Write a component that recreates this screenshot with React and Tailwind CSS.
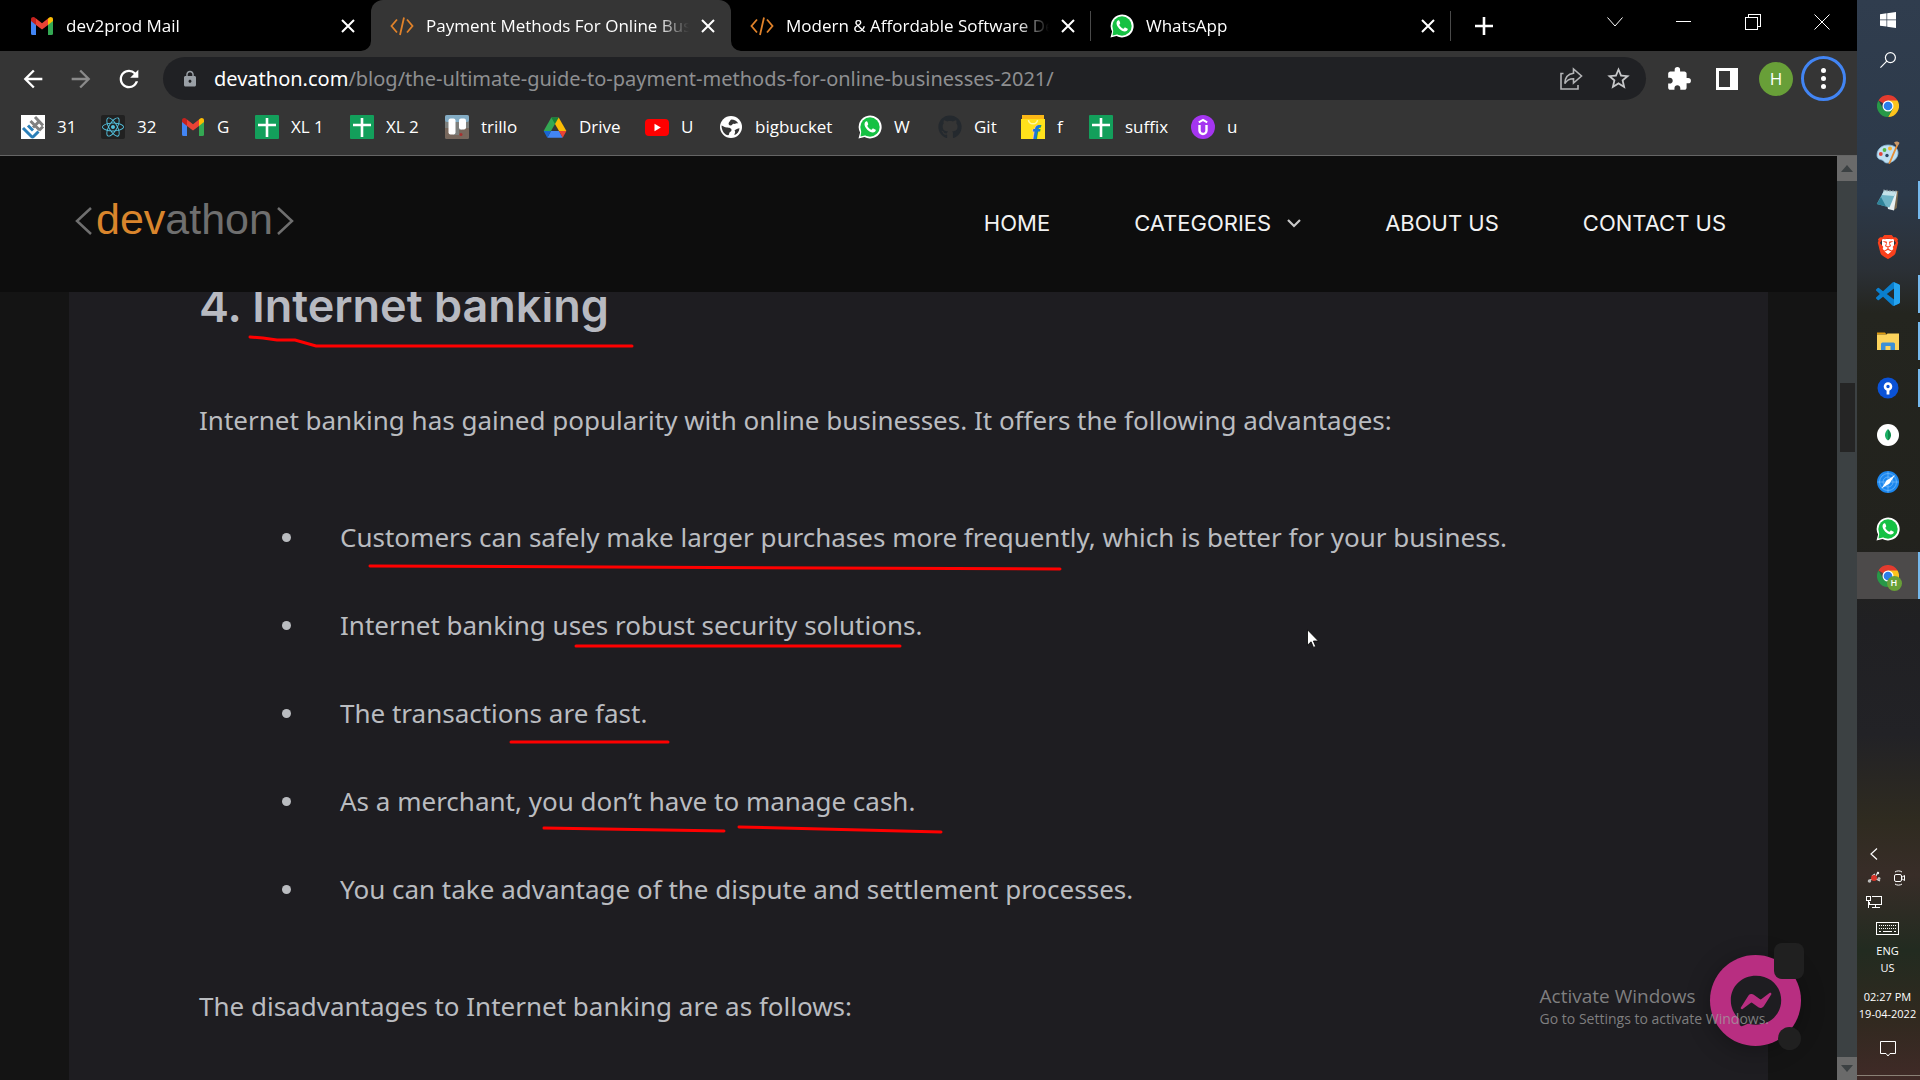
import React from "react";
import { FaWhatsapp, FaGithub, FaReact, FaFacebookMessenger } from "react-icons/fa";
import { MdExtension, MdLock, MdStarBorder, MdRefresh, MdArrowBack, MdArrowForward } from "react-icons/md";
import { SiBrave } from "react-icons/si";

/* ---------- icons ---------- */

function Gmail() {
  return (
    <svg viewBox="0 0 24 24" className="size-6" aria-hidden="true">
      <path d="M1 20.5V6l5 4v11H2.5A1.5 1.5 0 0 1 1 19.500z" fill="#4285f4" />
      <path d="M18 21V10l5-4v13.500a1.500 1.500 0 0 1-1.500 1.500z" fill="#34a853" />
      <path d="M6 11V4.500l6 4.700 6-4.700V11l-6 4.600z" fill="#ea4335" />
      <path d="M1 7V5.300C1 3.200 3.300 2.300 4.800 3.500L6 4.500V11z" fill="#c5221f" />
      <path d="M23 7V5.300c0-2.100-2.300-3-3.800-1.800L18 4.500V11z" fill="#fbbc04" />
    </svg>
  );
}

function CodeMark() {
  return (
    <svg viewBox="0 0 24 24" className="size-6" fill="none" stroke="#e0822a" strokeWidth="1.8" aria-hidden="true">
      <path d="M7 5.500 1.500 12 7 18.500M17 5.500 22.500 12 17 18.500M14 3.500 10 21" />
    </svg>
  );
}

function WhatsAppMark() {
  return (
    <svg viewBox="0 0 24 24" className="size-6" aria-hidden="true">
      <path d="M.5 23.500 2.100 17.600A11.500 11.500 0 1 1 6.500 22z" fill="#fff" />
      <circle cx="12" cy="12" r="9.700" fill="#15c143" />
      <path d="M3.500 15 2.500 21.500 9 20z" fill="#15c143" />
      <path
        d="M8.500 6.300c-.7 0-2 1-2 3 0 3.300 4.700 8.300 8.300 8.300 1.600 0 3-1.200 3-2.500 0-.5-.2-.6-2.600-1.700-.7-.3-1 1.400-1.800 1.300-1.300-.2-4-2.700-4.100-3.900 0-.6 1.200-1 .9-1.800-.8-2.200-.9-2.700-1.700-2.700z"
        fill="#fff"
      />
    </svg>
  );
}

function HackerBlog() {
  return (
    <svg viewBox="0 0 24 24" className="size-6" aria-hidden="true">
      <rect width="24" height="24" fill="#fff" />
      <g fill="none" strokeWidth="3" strokeLinejoin="round">
        <path d="M9.500 6l9 9M14 2l8 8.500M12 12.500l5.500-5.500M18 15.500l4-4" stroke="#808080" />
        <path d="M2 13l8.500 8.500a1.500 1.500 0 0 0 2 0l5-5M7 10.500l5 5" stroke="#2a7fb8" />
      </g>
    </svg>
  );
}

function ReactMark() {
  return (
    <span className="flex size-6 items-center justify-center rounded-xs bg-[#212121]">
      <FaReact className="size-[22px] text-[#53c1de]" />
    </span>
  );
}

function Sheet() {
  return (
    <svg viewBox="0 0 24 24" className="size-6" aria-hidden="true">
      <rect width="24" height="24" rx="1" fill="#139f5b" />
      <path d="M12 3v19M3 10h18" stroke="#fff" strokeWidth="2.600" />
    </svg>
  );
}

function Trello() {
  return (
    <svg viewBox="0 0 24 24" className="size-6" aria-hidden="true">
      <rect width="24" height="24" rx="2" fill="#7d7f7c" />
      <rect width="24" height="7" rx="2" fill="#83acc4" />
      <path d="M0 13h4v3h4v4h6v-5h3v-2h7v9a2 2 0 0 1-2 2H2a2 2 0 0 1-2-2z" fill="#77675c" />
      <circle cx="16" cy="19.500" r="1.500" fill="#a8302f" />
      <rect x="3.500" y="3.500" width="7" height="16" rx="2" fill="#fff" />
      <rect x="14" y="3.500" width="7" height="11" rx="2" fill="#fff" />
    </svg>
  );
}

function Drive() {
  return (
    <svg viewBox="0 0 24 24" className="size-6" aria-hidden="true">
      <path d="M8.300 2.500h7.400L8 16H.6z" fill="#34a853" />
      <path d="M8.300 2.500h7.400L12 9z" fill="#188038" />
      <path d="M15.700 2.500 23.400 16H16L12 9z" fill="#fbbc04" />
      <path d="M8 16h8l3.700 6.800H4.300z" fill="#4285f4" />
      <path d="M.6 16H8l-3.700 6.800z" fill="#1967d2" />
      <path d="M16 16h7.400l-3.700 6.800z" fill="#ea4335" />
    </svg>
  );
}

function YouTube() {
  return (
    <svg viewBox="0 0 24 24" className="size-6" aria-hidden="true">
      <rect y="4" width="24" height="17" rx="4" fill="#f00" />
      <path d="M9.500 8.800v7.400l6.300-3.700z" fill="#fff" />
    </svg>
  );
}

function Globe() {
  return (
    <svg viewBox="0 0 24 24" className="size-6" aria-hidden="true">
      <circle cx="12" cy="12" r="11" fill="#fff" />
      <g fill="#353535">
        <path d="M12.500 4.500c2.500 0 5.500 1.200 6.800 4-1.800-.8-2.800.8-4.600.3-1.400-.4-1 1.500-2.700 1.600-2.300.1-2.800-1.500-2.200-2.700.6-1.300 2-1.400 1.400-2.400z" />
        <path d="M2.500 10.500c2 .5 3 2 5.500 2 2 .1 4.500.6 4.500 2.500 0 1.500-1.300 1.500-2 2.500-.5 1-.2 2.800-1.500 2.800-3 0-6.500-4.500-6.500-9.800z" />
        <path d="M15.500 15.500c1-1.300 3.500-2 5-2.300-.2 3-2.300 5.800-4.800 6.900-1-.6 1.600-2.800-.2-4.600z" />
      </g>
    </svg>
  );
}

function Flipkart() {
  return (
    <svg viewBox="0 0 24 24" className="size-6" aria-hidden="true">
      <path d="M1 0h22v4h1v20H0V4h1z" fill="#ffe11b" />
      <path d="M1 0h22v4H1z" fill="#fbb716" />
      <path d="M7.500 5c.5 5 8.500 5 9 0" fill="none" stroke="#fff6a0" strokeWidth="1.500" />
      <text x="11" y="24" fontFamily="Inter, sans-serif" fontStyle="italic" fontWeight="900" fontSize="18" fill="#1878d8">f</text>
    </svg>
  );
}

function Udemy() {
  return (
    <svg viewBox="0 0 24 24" className="size-6" fill="none" aria-hidden="true">
      <circle cx="12" cy="12" r="12" fill="#a435f0" />
      <path d="M7.800 7.300 12 4.800l4.200 2.500" stroke="#fff" strokeWidth="2" />
      <path d="M8.500 10v5.500a3.500 3.500 0 0 0 7 0V10" stroke="#fff" strokeWidth="2.400" />
    </svg>
  );
}

function Chrome({ className = "size-[22px]" }) {
  return (
    <svg viewBox="0 0 24 24" className={className} aria-hidden="true">
      <path d="M12 12 1.600 6A12 12 0 0 1 22.400 6z" fill="#e33b2e" />
      <path d="M12 12V6h10.400A12 12 0 0 1 12 24l5.200-9z" fill="#fcc41d" />
      <path d="M17.200 15 12 24A12 12 0 0 1 1.600 6l5.200 9 5.200 3z" fill="#279847" />
      <circle cx="12" cy="12" r="6" fill="#fff" />
      <circle cx="12" cy="12" r="4.700" fill="#2b7de9" />
    </svg>
  );
}

function Paint() {
  return (
    <svg viewBox="0 0 24 24" className="size-6" aria-hidden="true">
      <path d="M1 14C1 8 6 4 12 4s10 3 10 8-5 10-11 10c-3 0-3-2.500-5-3s-5-1-5-5z" fill="#bfe0f2" stroke="#86b8d8" strokeWidth=".8" />
      <circle cx="4.800" cy="13" r="1.900" fill="#e2463b" />
      <circle cx="8.500" cy="9" r="1.900" fill="#57b947" />
      <circle cx="14" cy="7.500" r="2" fill="#f6b22f" />
      <circle cx="11" cy="14.500" r="1.700" fill="#2a4666" />
      <path d="M20.500 3.500 22 4.500 14 23l-1.700-.5z" fill="#e58b32" />
      <path d="M18 1.500c2-1.500 4.500-1 5.500.5-.5 1-1 2.500-2.500 3.500z" fill="#c99868" />
    </svg>
  );
}

function Notes() {
  return (
    <svg viewBox="0 0 24 24" className="size-6" aria-hidden="true">
      <path d="M20 3h2.300l-1.500 17-3 2z" fill="#7a6a50" />
      <path d="M8 2.500 21 3.500 18 22.500 12 21z" fill="#e9f1f3" />
      <path d="M8 2.500 20 4 13.500 19.500.8 16z" fill="#6fb4c6" />
      <path d="M8 2.500 20 4l-1.800 4L6 7z" fill="#c5e2e9" />
      <path d="M.8 16 5 9l5 9.500z" fill="#2f8298" />
      <path d="M8 1.500v2M11 1.700v2M14 2v2M17 2.200v2M20 2.500v2" stroke="#9da9ad" />
    </svg>
  );
}

function Brave() {
  return (
    <span className="relative flex size-6 items-center justify-center">
      <span className="absolute h-4 w-3 rounded-b-md bg-white" />
      <SiBrave className="relative size-6 text-[#f9401c]" />
    </span>
  );
}

function VsCode() {
  return (
    <svg viewBox="0 0 24 24" className="size-6" aria-hidden="true">
      <path
        d="M23.150 2.587L18.210.21a1.494 1.494 0 0 0-1.705.29l-9.460 8.630-4.120-3.128a.999.999 0 0 0-1.276.057L.327 7.261A1 1 0 0 0 .326 8.740L3.899 12 .326 15.260a1 1 0 0 0 .001 1.479L1.650 17.940a.999.999 0 0 0 1.276.057l4.120-3.128 9.460 8.630a1.492 1.492 0 0 0 1.704.29l4.942-2.377A1.500 1.500 0 0 0 24 20.060V3.939a1.500 1.500 0 0 0-.85-1.352zm-5.146 14.861L10.826 12l7.178-5.448v10.896z"
        fill="#0a7fce"
      />
      <path d="M18 .2 23.150 2.600q.85.400.85 1.350v16.100q0 .95-.85 1.350L18 23.800z" fill="#25a4f0" />
    </svg>
  );
}

function Folder() {
  return (
    <svg viewBox="0 0 24 24" className="size-6" aria-hidden="true">
      <path d="M1 3.500h8l1.500 2H1z" fill="#dd9a10" />
      <path d="M1 5.500h9.500l1-1H23V21H1z" fill="#fcd35c" />
      <path d="M5 21v-6a1.500 1.500 0 0 1 1.500-1.500h11A1.500 1.500 0 0 1 19 15v6h-4.500v-4h-5v4z" fill="#3c8fd6" />
    </svg>
  );
}

function Sourcetree() {
  return (
    <svg viewBox="0 0 24 24" className="size-6" aria-hidden="true">
      <circle cx="12" cy="12" r="10.500" fill="#0a52d6" />
      <circle cx="12" cy="10.500" r="3" fill="none" stroke="#fff" strokeWidth="2.600" />
      <path d="M12 14v4.500" stroke="#fff" strokeWidth="2.800" />
    </svg>
  );
}

function Mongo() {
  return (
    <svg viewBox="0 0 24 24" className="size-6" aria-hidden="true">
      <circle cx="12" cy="12" r="11" fill="#fff" />
      <path d="M12 6c2 2 3 4 3 6.200 0 2.300-1.200 3.800-3 5.300z" fill="#0f8a4b" />
      <path d="M12 6c-2 2-3 4-3 6.200 0 2.300 1.200 3.800 3 5.300z" fill="#1bb065" />
    </svg>
  );
}

function Compass() {
  return (
    <svg viewBox="0 0 24 24" className="size-6" aria-hidden="true">
      <circle cx="12" cy="12" r="11" fill="#1b87ef" />
      <g fill="none" stroke="#6db6fa" strokeWidth=".8">
        <circle cx="12" cy="12" r="8.500" />
        <circle cx="12" cy="12" r="5" />
        <path d="M1.500 12h21M12 1.500v21" />
      </g>
      <path d="M19 5 13.500 13.500 5.500 18.500l5-8z" fill="#fff" />
    </svg>
  );
}

function ProfileChrome() {
  return (
    <span className="relative">
      <Chrome />
      <span className="absolute -right-[3px] -bottom-1 flex size-[15px] items-center justify-center rounded-full bg-[#689f38] text-[9px] font-semibold text-white">
        H
      </span>
    </span>
  );
}

function CloseX() {
  return (
    <svg viewBox="0 0 14 14" className="size-[14px]" stroke="#fff" strokeWidth="2" aria-hidden="true">
      <path d="M1 1l12 12M13 1 1 13" />
    </svg>
  );
}

/* ---------- browser chrome ---------- */

const tabs = [
  { title: "dev2prod Mail", icon: <Gmail /> },
  { title: "Payment Methods For Online Business", icon: <CodeMark />, active: true },
  { title: "Modern & Affordable Software Development", icon: <CodeMark /> },
  { title: "WhatsApp", icon: <WhatsAppMark /> },
];

function Tab({ title, icon, active, divided }) {
  return (
    <div
      className={
        "relative flex h-full w-[360px] min-w-0 items-center gap-3 pl-[19px] pr-4 " +
        (active ? "rounded-t-xl bg-[#353535]" : "")
      }
    >
      {active && (
        <>
          <svg viewBox="0 0 10 10" className="absolute bottom-0 -left-[10px] size-[10px]" fill="#353535" aria-hidden="true">
            <path d="M10 0v10H0A10 10 0 0 0 10 0z" />
          </svg>
          <svg viewBox="0 0 10 10" className="absolute bottom-0 -right-[10px] size-[10px]" fill="#353535" aria-hidden="true">
            <path d="M0 0v10h10A10 10 0 0 1 0 0z" />
          </svg>
        </>
      )}
      <span className="shrink-0">{icon}</span>
      <span className="min-w-0 flex-1 overflow-hidden whitespace-nowrap text-[17px] [mask-image:linear-gradient(to_right,black_88%,transparent)]">
        {title}
      </span>
      <button type="button" aria-label={"Close " + title} className="shrink-0">
        <CloseX />
      </button>
      {divided && <span className="absolute right-0 h-[30px] w-px bg-[#4a4a4a]" />}
    </div>
  );
}

function TabStrip() {
  return (
    <div className="flex h-[51px] bg-black pl-[11px] pr-px">
      {tabs.map((t, i) => (
        <Tab key={t.title} {...t} divided={i > 1} />
      ))}
      <button type="button" aria-label="New tab" className="ml-6 shrink-0">
        <svg viewBox="0 0 18 18" className="size-[18px]" stroke="#fff" strokeWidth="2.600" aria-hidden="true">
          <path d="M9 0v18M0 9h18" />
        </svg>
      </button>
      <div className="ml-auto flex h-[43px] shrink-0 items-center">
        <button type="button" aria-label="Search tabs" className="flex w-[69px] justify-center">
          <svg viewBox="0 0 16 10" className="h-[10px] w-4" fill="none" stroke="#fff" strokeWidth="1" aria-hidden="true">
            <path d="M.5.5 8 9 15.500.5" />
          </svg>
        </button>
        <button type="button" aria-label="Minimize" className="flex w-[69px] justify-center">
          <span className="h-px w-[15px] bg-white" />
        </button>
        <button type="button" aria-label="Restore" className="flex w-[69px] justify-center">
          <svg viewBox="0 0 16 16" className="size-4" fill="none" stroke="#fff" shapeRendering="crispEdges" aria-hidden="true">
            <path d="M.5 3.500h12v12H.5zM3.500 3.500v-3h12v12h-3" />
          </svg>
        </button>
        <button type="button" aria-label="Close window" className="flex w-[69px] justify-center">
          <svg viewBox="0 0 16 16" className="size-4" stroke="#fff" aria-hidden="true">
            <path d="M.5.5l15 15M15.500.5l-15 15" />
          </svg>
        </button>
      </div>
    </div>
  );
}

function Toolbar() {
  return (
    <div className="flex h-[55px] items-center bg-[#353535] pl-[19px] pr-[11px]">
      <div className="flex shrink-0 items-center gap-5">
        <button type="button" aria-label="Back"><MdArrowBack className="size-7 text-white" /></button>
        <button type="button" aria-label="Forward"><MdArrowForward className="size-7 text-[#8a8a8a]" /></button>
        <button type="button" aria-label="Reload"><MdRefresh className="size-7 text-white" /></button>
      </div>
      <div className="ml-5 flex h-[43px] min-w-0 flex-1 items-center rounded-full bg-[#202124] pl-[18px] pr-[14px]">
        <MdLock className="size-[18px] shrink-0 text-[#9aa0a6]" />
        <span className="ml-[15px] min-w-0 flex-1 overflow-hidden whitespace-nowrap font-['Noto_Sans',sans-serif] text-[20px] text-[#8e8f91]">
          <span className="text-white">devathon.com</span>/blog/the-ultimate-guide-to-payment-methods-for-online-businesses-2021/
        </span>
        <div className="flex shrink-0 items-center gap-[22px]">
          <button type="button" aria-label="Share this page">
            <svg viewBox="0 0 24 24" className="size-6" fill="none" stroke="#b4b5b7" strokeWidth="1.600" aria-hidden="true">
              <path d="M4.500 6.500H2V22h17v-4" />
              <path d="M14.500 2v4.300C8.500 7 6 11 5.800 16.500c2-3.500 5-4.800 8.700-4.800V16l8-7z" />
            </svg>
          </button>
          <button type="button" aria-label="Bookmark this page"><MdStarBorder className="size-[27px] text-[#c6c7c9]" /></button>
        </div>
      </div>
      <div className="flex shrink-0 items-center">
        <button type="button" aria-label="Extensions" className="ml-5"><MdExtension className="size-[26px] text-white" /></button>
        <button type="button" aria-label="Side panel" className="ml-6">
          <svg viewBox="0 0 22 22" className="size-[22px]" aria-hidden="true">
            <path d="M0 0h22v22H0zM3 3v16h11V3z" fill="#fff" fillRule="evenodd" />
          </svg>
        </button>
        <button type="button" aria-label="Profile" className="ml-[21px] flex size-[34px] items-center justify-center rounded-full bg-[#689f38] text-[17px] text-white">
          H
        </button>
        <button type="button" aria-label="Menu" className="ml-2 flex size-[45px] flex-col items-center justify-center gap-[3px] rounded-full border-[3px] border-[#4285f4]">
          <span className="size-[5px] rounded-full bg-white" />
          <span className="size-[5px] rounded-full bg-white" />
          <span className="size-[5px] rounded-full bg-white" />
        </button>
      </div>
    </div>
  );
}

const bookmarks = [
  { label: "31", icon: <HackerBlog />, w: "w-20" },
  { label: "32", icon: <ReactMark />, w: "w-20" },
  { label: "G", icon: <Gmail />, w: "w-[74px]" },
  { label: "XL 1", icon: <Sheet />, w: "w-[95px]" },
  { label: "XL 2", icon: <Sheet />, w: "w-[95px]" },
  { label: "trillo", icon: <Trello />, w: "w-[98px]" },
  { label: "Drive", icon: <Drive />, w: "w-[102px]" },
  { label: "U", icon: <YouTube />, w: "w-[74px]" },
  { label: "bigbucket", icon: <Globe />, w: "w-[139px]" },
  { label: "W", icon: <WhatsAppMark />, w: "w-20" },
  { label: "Git", icon: <FaGithub className="size-6 text-[#24292e]" />, w: "w-[83px]" },
  { label: "f", icon: <Flipkart />, w: "w-[68px]" },
  { label: "suffix", icon: <Sheet />, w: "w-[102px]" },
  { label: "u", icon: <Udemy />, w: "w-20" },
];

function Bookmarks() {
  return (
    <nav aria-label="Bookmarks" className="flex items-center border-b border-[#656565] bg-[#353535] pt-[9px] pb-4 pl-[21px] text-[17px] leading-6">
      {bookmarks.map((b) => (
        <a key={b.label} href="#" className={"flex shrink-0 items-center gap-3 whitespace-nowrap " + b.w}>
          {b.icon}
          {b.label}
        </a>
      ))}
    </nav>
  );
}

/* ---------- web page ---------- */

function SiteHeader() {
  return (
    <header className="relative z-10 flex h-[136px] shrink-0 items-center justify-between bg-[#0d0d0d] pb-0.5 pl-[75px] pr-[111px]">
      <a href="#" className="flex items-center gap-1 pb-2 font-['Liberation_Sans',sans-serif] text-[43px] leading-[48px] text-[#6f6f6f]">
        <svg viewBox="0 0 17 28" className="mt-1 h-7 w-[17px]" fill="none" stroke="#6f6f6f" strokeWidth="2.500" aria-hidden="true">
          <path d="M16 1 2 14l14 13" />
        </svg>
        <span><span className="text-[#d9852c]">dev</span>athon</span>
        <svg viewBox="0 0 17 28" className="mt-1 h-7 w-[17px]" fill="none" stroke="#6f6f6f" strokeWidth="2.500" aria-hidden="true">
          <path d="M1 1l14 13L1 27" />
        </svg>
      </a>
      <nav aria-label="Main" className="flex items-center gap-[84px] font-['Inter',sans-serif] text-[22px] text-[#f2f2f2]">
        <a href="#">HOME</a>
        <a href="#" className="flex items-center gap-4">
          CATEGORIES
          <svg viewBox="0 0 14 9" className="h-[9px] w-[14px]" fill="none" stroke="#c8c8c8" strokeWidth="2.200" aria-hidden="true">
            <path d="M1 1l6 6 6-6" />
          </svg>
        </a>
        <a href="#">ABOUT US</a>
        <a href="#">CONTACT US</a>
      </nav>
    </header>
  );
}

const advantages = [
  "Customers can safely make larger purchases more frequently, which is better for your business.",
  "Internet banking uses robust security solutions.",
  "The transactions are fast.",
  "As a merchant, you don’t have to manage cash.",
  "You can take advantage of the dispute and settlement processes.",
];

/* Red pen strokes drawn over the article. */
function PenMarks() {
  return (
    <svg
      className="pointer-events-none absolute top-0 left-0 h-[788px] w-[1200px]"
      viewBox="0 0 1200 788"
      fill="none"
      stroke="#f00"
      strokeWidth="3"
      strokeLinecap="round"
      aria-hidden="true"
    >
      <path d="M181 45 194 46 208 48H226L247 54H563" />
      <path d="M301 274 991 277" />
      <path d="M507 354H831" />
      <path d="M442 450H599" />
      <path d="M475 536 655 539" />
      <path d="M670 535 872 540" />
    </svg>
  );
}

function Article() {
  return (
    <article className="relative mx-[69px] min-h-0 flex-1 overflow-hidden bg-[#1e1d21] px-[130px] font-['Noto_Sans',sans-serif] text-[26px] leading-[44px] text-[#babcc0]">
      <h2 className="-mt-4 font-['Inter',sans-serif] text-[45px] font-semibold leading-[60px] text-[#b8bac1]">4. Internet banking</h2>
      <p className="mt-[62px]">Internet banking has gained popularity with online businesses. It offers the following advantages:</p>
      <ul className="mt-[73px] flex flex-col gap-[44px] pl-[83px]">
        {advantages.map((a) => (
          <li key={a} className="flex items-center gap-[49px]">
            <span className="size-[9px] shrink-0 rounded-full bg-[#babcc0]" />
            {a}
          </li>
        ))}
      </ul>
      <p className="mt-[73px]">The disadvantages to Internet banking are as follows:</p>
      <PenMarks />
    </article>
  );
}

function Scrollbar() {
  return (
    <div className="flex w-5 shrink-0 flex-col items-center bg-[#3c4143]" aria-hidden="true">
      <div className="flex h-[25px] w-full items-center justify-center bg-[#6a6a6a]">
        <svg viewBox="0 0 12 7" className="h-[7px] w-3" fill="#3c4143"><path d="M6 0l6 7H0z" /></svg>
      </div>
      <div className="flex-[202]" />
      <div className="h-[69px] w-[15px] bg-[#252525]" />
      <div className="flex-[605]" />
      <div className="flex h-[23px] w-full items-center justify-center bg-[#6a6a6a]">
        <svg viewBox="0 0 12 7" className="h-[7px] w-3" fill="#3c4143"><path d="M0 0h12L6 7z" /></svg>
      </div>
    </div>
  );
}

function ChatButton() {
  return (
    <div className="absolute right-9 bottom-[34px]">
      <button type="button" aria-label="Open chat" className="flex size-[91px] items-center justify-center rounded-full bg-[#b82e81] shadow-[0_4px_24px_rgba(0,0,0,0.3)]">
        <FaFacebookMessenger className="size-[52px] text-[#1e1d21]" />
      </button>
      <span className="absolute -top-3 -right-[3px] h-9 w-[30px] rounded-lg bg-[#202020]" />
      <span className="absolute right-0 -bottom-1 size-[23px] rounded-full bg-[#202020]" />
    </div>
  );
}

function Watermark() {
  return (
    <div className="pointer-events-none absolute right-[68px] bottom-[51px] text-[#a0a0a0]/75">
      <p className="text-[19px] leading-[26px] whitespace-nowrap">Activate Windows</p>
      <p className="text-[14px] leading-5 whitespace-nowrap">Go to Settings to activate Windows.</p>
    </div>
  );
}

function Pointer() {
  return (
    <svg viewBox="0 0 12 19" className="absolute top-[473px] left-[1307px] h-[19px] w-3" aria-hidden="true">
      <path d="M.5.800v15.400l3.600-3.400 2.400 5.600 2.200-1-2.300-5.400h5z" fill="#fff" stroke="#000" strokeWidth=".8" />
    </svg>
  );
}

/* ---------- desktop taskbar ---------- */

const apps = [
  { name: "Google Chrome", icon: <Chrome /> },
  { name: "Paint", icon: <Paint /> },
  { name: "Notepad", icon: <Notes />, open: true },
  { name: "Brave", icon: <Brave /> },
  { name: "Visual Studio Code", icon: <VsCode />, open: true },
  { name: "File Explorer", icon: <Folder />, open: true },
  { name: "Sourcetree", icon: <Sourcetree />, open: true },
  { name: "MongoDB Compass", icon: <Mongo /> },
  { name: "Browser", icon: <Compass /> },
  { name: "WhatsApp", icon: <WhatsAppMark /> },
  { name: "Chrome profile H", icon: <ProfileChrome />, open: true, current: true },
];

function Taskbar() {
  return (
    <aside className="flex w-[63px] shrink-0 flex-col bg-[linear-gradient(#303d4e_0%,#2c3949_18%,#2b3036_25%,#24251f_29%,#22221d_50%,#202023_58%,#222226_68%,#2f2b20_76%,#382d28_81%,#222b20_88%,#30291f_94%,#402a27_100%)] text-white">
      <button type="button" aria-label="Start" className="flex h-10 items-center justify-center pr-0.5">
        <svg viewBox="0 0 16 16" className="size-4" fill="#fff" aria-hidden="true">
          <path d="M0 2.200 6.500 1.300v6.200H0zM7.200 1.200 16 0v7.500H7.200zM0 8.300h6.500v6.300L0 13.700zM7.200 8.300H16V16l-8.800-1.300z" />
        </svg>
      </button>
      <button type="button" aria-label="Search" className="flex h-10 items-center justify-center pr-0.5">
        <svg viewBox="0 0 16 16" className="size-4" fill="none" stroke="#fff" strokeWidth="1.200" aria-hidden="true">
          <circle cx="10.400" cy="5.600" r="5" />
          <path d="M6.800 9.200.4 15.600" />
        </svg>
      </button>
      <div className="flex flex-col pt-0.5">
        {apps.map((a) => (
          <button
            key={a.name}
            type="button"
            aria-label={a.name}
            className={"relative flex h-[47px] items-center justify-center pr-0.5 " + (a.current ? "bg-[#4c4a4a]" : "")}
          >
            {a.icon}
            {a.open && <span className={"absolute right-0 w-0.5 bg-[#76b9ed] " + (a.current ? "h-full" : "h-[38px]")} />}
          </button>
        ))}
      </div>
      <div className="mt-auto flex flex-col pr-0.5 text-center text-[11px] leading-[17px]">
        <div className="flex h-6 items-center pl-[13px]">
          <svg viewBox="0 0 8 12" className="h-3 w-2" fill="none" stroke="#fff" strokeWidth="1.200" aria-hidden="true">
            <path d="M7 .5 1 6l6 5.500" />
          </svg>
        </div>
        <div className="flex h-6 items-center gap-3 pl-[10px]">
          <svg viewBox="0 0 14 14" className="size-[14px]" aria-hidden="true">
            <path d="M1 10.500 5 8M9 5l2-4M5 5l3-2M9 8l4 2" stroke="#ddd" strokeWidth="1.200" />
            <circle cx="7" cy="7" r="3" fill="#d8352a" />
            <circle cx="2.500" cy="10" r="1.700" fill="#bbb" />
            <circle cx="12" cy="7.500" r="1.500" fill="#bbb" />
            <circle cx="11" cy="2" r="1.200" fill="#eee" />
          </svg>
          <svg viewBox="0 0 12 16" className="h-4 w-3" fill="none" stroke="#fff" aria-hidden="true">
            <rect x="1.500" y="4.500" width="7" height="7" rx="1.500" />
            <path d="M8.500 7.500 11.500 5.500v5l-3-2M2 2c2-1.500 5-1.500 7 0M2 14c2 1.500 5 1.500 7 0" />
          </svg>
        </div>
        <div className="flex h-6 items-center pl-[9px]">
          <svg viewBox="0 0 16 14" className="h-[14px] w-4" fill="none" stroke="#fff" shapeRendering="crispEdges" aria-hidden="true">
            <path d="M5.500 1.500h10v8h-12v-3M.5 1.500h4v4h-4zM2.500 5.500v7M9.500 9.500v3M5.500 12.500h8" />
          </svg>
        </div>
        <div className="flex h-7 items-center justify-center">
          <svg viewBox="0 0 23 13" className="h-[13px] w-[23px]" fill="none" stroke="#fff" shapeRendering="crispEdges" aria-hidden="true">
            <rect x=".5" y=".5" width="22" height="12" rx="1" />
            <path d="M3 3.500h17M3 6.500h17" strokeDasharray="1 1" />
            <path d="M3 9.500h2M7 9.500h9M18 9.500h2" />
          </svg>
        </div>
        <p>ENG</p>
        <p>US</p>
        <p className="mt-3">02:27 PM</p>
        <p className="whitespace-nowrap">19-04-2022</p>
        <button type="button" aria-label="Notifications" className="flex h-[53px] items-center justify-center">
          <svg viewBox="0 0 16 16" className="size-4" fill="none" stroke="#fff" aria-hidden="true">
            <path d="M.5.500h15v12H10l-2 2.500-2-2.500H.5z" />
          </svg>
        </button>
      </div>
      <div className="h-[5px] border-t border-[#8a8076]" />
    </aside>
  );
}

export default function App() {
  return (
    <div className="flex h-screen w-full overflow-hidden bg-black font-['Open_Sans',sans-serif] text-white">
      <div className="flex min-w-0 flex-1 flex-col">
        <TabStrip />
        <Toolbar />
        <Bookmarks />
        <div className="flex min-h-0 flex-1">
          <main className="relative flex min-w-0 flex-1 flex-col overflow-hidden bg-[#141414]">
            <SiteHeader />
            <Article />
            <ChatButton />
            <Watermark />
            <Pointer />
          </main>
          <Scrollbar />
        </div>
      </div>
      <Taskbar />
    </div>
  );
}
